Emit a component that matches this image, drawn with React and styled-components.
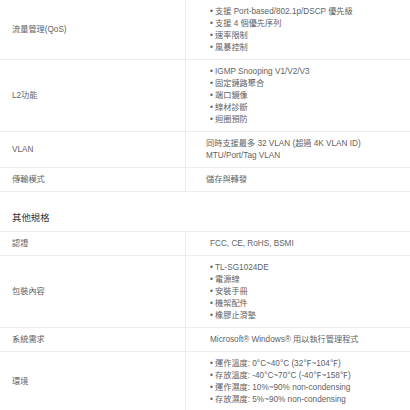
import React from 'react'
import styled, { createGlobalStyle } from 'styled-components'

/***** Component style *****/
const GlobalStyle = createGlobalStyle`
	body {
		margin:0;
		background:#fff;
		font-family:"Liberation Sans", "Noto Sans CJK TC", sans-serif;
	}
`
const Page = styled.div`
	width:410px;
	overflow:hidden;
	color:#626262;
	font-size:8.2px;
	line-height:12px;
`
const Table = styled.div`
	display:flex;
	flex-direction:column;
	border-top:${props => props.$noTop ? 'none' : '1px solid #ececec'};
`
const Row = styled.div`
	display:grid;
	grid-template-columns:186px 1fr;
	border-bottom:1px solid #ececec;
`
const Label = styled.div`
	display:flex;
	align-items:center;
	padding:5.5px 12px;
	border-right:1px solid #ececec;
`
const Value = styled.div`
	display:flex;
	flex-direction:column;
	justify-content:center;
	padding:5.5px 8px 5.5px 20px;
`
const List = styled.ul`
	margin:0;
	padding:0 0 0 4px;
	list-style:none;
	& li {
		display:flex;
	}
	& li::before {
		content:'•';
		width:5px;
		flex:none;
	}
`
const SectionTitle = styled.div`
	padding:20px 12px 7px;
	font-size:9.4px;
	line-height:12px;
	color:#333;
`
/****** ******************** *****/

const specs = [
	{ name: '流量管理(QoS)', list: ['支援 Port-based/802.1p/DSCP 優先級', '支援 4 個優先序列', '速率限制', '風暴控制'] },
	{ name: 'L2功能', list: ['IGMP Snooping V1/V2/V3', '固定鏈路聚合', '端口鏡像', '線材診斷', '迴圈預防'] },
	{ name: 'VLAN', lines: ['同時支援最多 32 VLAN (超過 4K VLAN ID)', 'MTU/Port/Tag VLAN'] },
	{ name: '傳輸模式', lines: ['儲存與轉發'] },
]

const others = [
	{ name: '認證', lines: ['FCC, CE, RoHS, BSMI'], indent: true },
	{ name: '包裝內容', list: ['TL-SG1024DE', '電源線', '安裝手冊', '機架配件', '橡膠止滑墊'] },
	{ name: '系統需求', lines: ['Microsoft® Windows® 用以執行管理程式'], indent: true },
	{ name: '環境', list: ['運作溫度: 0°C~40°C (32℉~104℉)', '存放溫度: -40°C~70°C (-40℉~158℉)', '運作濕度: 10%~90% non-condensing', '存放濕度: 5%~90% non-condensing'] },
]

const SpecRow = ({ data }) => (
	<Row>
		<Label>{data.name}</Label>
		<Value>
			{data.list ? (
				<List>
					{data.list.map((item, i) => <li key={i}>{item}</li>)}
				</List>
			) : (
				data.lines.map((line, i) => (
					<div key={i} style={data.indent ? { paddingLeft: 4 } : undefined}>{line}</div>
				))
			)}
		</Value>
	</Row>
)

const App = () => {
	return (
		<Page>
			<GlobalStyle />
			<Table $noTop>
				{specs.map((data, i) => <SpecRow data={data} key={i} />)}
			</Table>
			<SectionTitle>其他規格</SectionTitle>
			<Table>
				{others.map((data, i) => <SpecRow data={data} key={i} />)}
			</Table>
		</Page>
	)
}

export default App
